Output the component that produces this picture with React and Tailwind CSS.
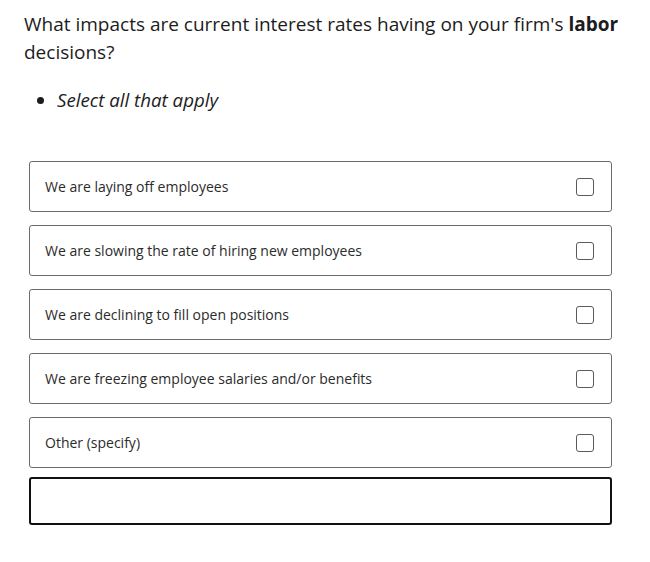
import { useState } from "react";

const options = [
  "We are laying off employees",
  "We are slowing the rate of hiring new employees",
  "We are declining to fill open positions",
  "We are freezing employee salaries and/or benefits",
  "Other (specify)",
];

function OptionRow({ label, checked, onToggle }) {
  return (
    <label className="flex h-[51px] cursor-pointer items-center justify-between rounded-[3px] border border-[#6b6b6b] bg-white pl-[15px] pr-[17px]">
      <span className="text-[14px] text-[#2b2b2b]">{label}</span>
      <span
        onClick={onToggle}
        className={`flex h-[18px] w-[18px] items-center justify-center rounded-[3px] border-[1.5px] border-[#5a5a5a] ${
          checked ? "bg-[#333]" : "bg-white"
        }`}
      />
    </label>
  );
}

export default function App() {
  const [picked, setPicked] = useState({});
  const [other, setOther] = useState("");

  return (
    <div className="min-h-[562px] bg-white pl-[24px] pr-[8px] pt-[10px] font-['Open_Sans',sans-serif] text-[#1c1c1c]">
      <h2 className="text-[19px] leading-[28px]">
        What impacts are current interest rates having on your firm's{" "}
        <strong className="font-bold">labor</strong> decisions?
      </h2>

      <ul className="mt-[20px] list-disc pl-[33px] text-[18.7px] italic leading-[28px]">
        <li>Select all that apply</li>
      </ul>

      <div className="ml-[5px] mt-[47px] flex w-[583px] flex-col gap-[13px]">
        {options.map((opt) => (
          <OptionRow
            key={opt}
            label={opt}
            checked={!!picked[opt]}
            onToggle={() => setPicked((p) => ({ ...p, [opt]: !p[opt] }))}
          />
        ))}
        <input
          value={other}
          onChange={(e) => setOther(e.target.value)}
          className="-mt-[4px] h-[48px] rounded-[3px] border-2 border-[#111] px-3 text-[14px] outline-none"
        />
      </div>
    </div>
  );
}
